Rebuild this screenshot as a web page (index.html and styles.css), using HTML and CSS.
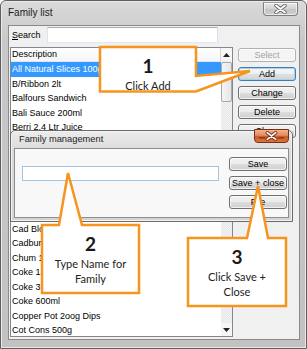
FILE: index.html
```html
<!DOCTYPE html>
<html>
<head>
<meta charset="utf-8">
<title>Family list</title>
<link rel="stylesheet" href="styles.css">
</head>
<body>
<div class="window">
  <div class="titlebar">
    <span class="title">Family list</span>
    <div class="close-btn">
      <svg width="13" height="10" viewBox="0 0 13 10"><path d="M2 1.5 L11 8.5 M11 1.5 L2 8.5" stroke="#6a6a6a" stroke-width="3.6" stroke-linecap="round"/><path d="M2 1.5 L11 8.5 M11 1.5 L2 8.5" stroke="#fff" stroke-width="1.8" stroke-linecap="round"/></svg>
    </div>
  </div>
  <div class="client">
    <div class="left">
      <div class="search-row">
        <span class="search-label"><u>S</u>earch</span>
        <div class="textbox search-input"></div>
      </div>
      <div class="listbox">
        <div class="list-main">
          <div class="list-header"><span>Description</span></div>
          <div class="row selected">All Natural Slices 100g</div>
          <div class="row">B/Ribbon 2lt</div>
          <div class="row">Balfours Sandwich</div>
          <div class="row">Bali Sauce 200ml</div>
          <div class="row">Berri 2.4 Ltr Juice</div>
          <div class="row">Biscuits Assorted</div>
          <div class="row">Bounty Bar</div>
          <div class="row">Bread White</div>
          <div class="row">Bundaberg Ginger Beer</div>
          <div class="row">Burger Rings</div>
          <div class="row">Cad Bar 50g</div>
          <div class="row">Cad Block 250g</div>
          <div class="row">Cadbury Flake</div>
          <div class="row">Chum 1.2kg</div>
          <div class="row">Coke 1.25lt</div>
          <div class="row">Coke 375ml</div>
          <div class="row">Coke 600ml</div>
          <div class="row">Copper Pot 2oog Dips</div>
          <div class="row">Cot Cons 500g</div>
        </div>
        <div class="vscroll">
          <div class="sb-arrow"><svg width="7" height="4" viewBox="0 0 7 4"><path d="M0 4 L3.5 0 L7 4 Z" fill="#222"/></svg></div>
          <div class="sb-thumb"></div>
          <div class="sb-track"></div>
          <div class="sb-arrow"><svg width="7" height="4" viewBox="0 0 7 4"><path d="M0 0 L3.5 4 L7 0 Z" fill="#222"/></svg></div>
        </div>
      </div>
    </div>
    <div class="side-buttons">
      <div class="btn disabled">Select</div>
      <div class="btn focused">Add</div>
      <div class="btn">Change</div>
      <div class="btn">Delete</div>
      <div class="btn">Close</div>
    </div>
  </div>
</div>

<div class="dialog">
  <div class="dlg-title">Family management</div>
  <div class="dlg-close">
    <svg width="35" height="14" viewBox="0 0 35 14"><path d="M4 9 H11 M24 9 H31" stroke="#8a2f12" stroke-width="1.2"/><path d="M13 3.5 L22 10.5 M22 3.5 L13 10.5" stroke="#7a2a10" stroke-width="3.6" stroke-linecap="round"/><path d="M13 3.5 L22 10.5 M22 3.5 L13 10.5" stroke="#fff" stroke-width="1.8" stroke-linecap="round"/></svg>
  </div>
  <div class="dlg-client">
    <div class="textbox dlg-input"></div>
    <div class="dlg-buttons">
      <div class="btn">Save</div>
      <div class="btn">Save + close</div>
      <div class="btn">File</div>
    </div>
  </div>
</div>

<svg class="callout-shapes" width="307" height="349" viewBox="0 0 307 349">
  <polygon points="100,47 196,47 196,76 250,71 196,91.5 100,91.5" />
  <polygon points="42,225 59,225 68,173 82,225 139,225 139,293 42,293" />
  <polygon points="188,238 247,238 258,186 268,238 286,238 286,306 188,306" />
</svg>

<div class="callout c1">
  <div class="num">1</div>
  <div class="ctext">Click Add</div>
</div>
<div class="callout c2">
  <div class="num">2</div>
  <div class="ctext">Type Name for<br>Family</div>
</div>
<div class="callout c3">
  <div class="num">3</div>
  <div class="ctext">Click Save +<br>Close</div>
</div>
</body>
</html>
```
FILE: styles.css
```css
* { box-sizing: border-box; }
html, body { margin: 0; padding: 0; }
body {
  width: 307px;
  height: 349px;
  overflow: hidden;
  position: relative;
  background: #ffffff;
  font-family: "Liberation Sans", Arial, sans-serif;
  font-size: 9px;
  color: #000;
}

/* ---------- main window ---------- */
.window {
  width: 307px;
  height: 349px;
  border: 1px solid #5f5f5f;
  border-radius: 6px 6px 0 0;
  background: linear-gradient(#dadada, #c8c8c8 40px, #c2c2c2);
  box-shadow: inset 0 0 0 1px #e9e9e9;
  display: flex;
  flex-direction: column;
}
.titlebar {
  height: 24px;
  display: flex;
  justify-content: space-between;
  align-items: flex-start;
  padding: 0 8px 0 7px;
}
.title {
  font-size: 10px;
  line-height: 24px;
  color: #1c1c1c;
}
.close-btn {
  width: 35px;
  height: 14px;
  margin-top: 1px;
  border: 1px solid #7f7f7f;
  border-top-color: #a0a0a0;
  border-radius: 0 0 4px 4px;
  background: linear-gradient(#e8e8e8, #d2d2d2 50%, #c4c4c4 50%, #cecece);
  box-shadow: inset 0 0 0 1px rgba(255,255,255,0.6);
  display: flex;
  align-items: center;
  justify-content: center;
}
.client {
  margin: 0 6px 0 7px;
  height: 315px;
  border: 1px solid #8a8a8a;
  background: #f0f0f0;
  display: flex;
}
.left {
  width: 223px;
  margin-left: 1px;
  padding-top: 1px;
  display: flex;
  flex-direction: column;
}
.search-row {
  height: 16px;
  display: flex;
  align-items: center;
}
.search-label {
  width: 37px;
  padding-left: 2px;
  line-height: 16px;
}
.textbox {
  background: #fff;
  border: 1px solid;
  border-color: #abadb3 #dbdfe6 #e3e9ef #e2e3ea;
}
.search-input {
  width: 171px;
  height: 16px;
}
.listbox {
  margin-top: 4px;
  height: 290px;
  border: 1px solid #828790;
  background: #fff;
  display: flex;
}
.list-main {
  flex: 1;
  overflow: hidden;
}
.list-header {
  height: 14px;
  line-height: 13px;
  padding-left: 1px;
  border-bottom: 1px solid #e5e5e5;
  border-right: 1px solid #d5d5d5;
  background: linear-gradient(#ffffff, #f5f6f7);
}
.row {
  height: 14.5px;
  line-height: 14.5px;
  padding-left: 1px;
  white-space: nowrap;
}
.row.selected {
  background: #3399ff;
  color: #fff;
}
.vscroll {
  width: 11px;
  display: flex;
  flex-direction: column;
  background: repeating-conic-gradient(#f3f3f3 0 25%, #e7e7e7 0 50%) 0 0 / 2px 2px;
}
.sb-arrow {
  height: 13px;
  display: flex;
  align-items: center;
  justify-content: center;
  background: #f6f6f6;
}
.sb-thumb {
  height: 40px;
  margin: 1px 0;
  border: 1px solid #a9a9a9;
  border-radius: 2px;
  background: linear-gradient(90deg, #f4f4f4, #e6e6e6);
}
.sb-track { flex: 1; }

/* ---------- buttons ---------- */
.side-buttons {
  width: 58px;
  margin-left: 5px;
  padding-top: 22px;
  display: flex;
  flex-direction: column;
  gap: 5px;
}
.btn {
  height: 14px;
  border: 1px solid #707070;
  border-radius: 3px;
  background: linear-gradient(#f2f2f2 0, #ebebeb 50%, #dddddd 50%, #cfcfcf 100%);
  box-shadow: inset 0 0 0 1px rgba(255,255,255,0.7);
  text-align: center;
  line-height: 12px;
  font-size: 9px;
  white-space: nowrap;
}
.btn.disabled {
  border-color: #adb2b5;
  background: #f4f4f4;
  color: #a3a3a3;
}
.btn.focused {
  border-color: #3c7fb1;
  box-shadow: inset 0 0 0 1px #a6d2ee;
  background: linear-gradient(#f7f7f7 0, #eeeeee 50%, #e0e0e0 50%, #d4d4d4 100%);
}

/* ---------- family management dialog ---------- */
.dialog {
  position: absolute;
  left: 10px;
  top: 130px;
  width: 283px;
  height: 92px;
  border: 1px solid #6a6a6a;
  border-radius: 5px 5px 0 0;
  background: linear-gradient(#ececec, #dadada 20px, #d4d4d4);
  box-shadow: inset 0 0 0 1px #f4f4f4;
  display: flex;
  flex-direction: column;
}
.dlg-title {
  height: 17px;
  line-height: 17px;
  padding-left: 8px;
  font-size: 9.3px;
  color: #1c1c1c;
}
.dlg-close {
  position: absolute;
  top: -2px;
  right: 3px;
  width: 35px;
  height: 14px;
  border: 1px solid #7a2e14;
  border-radius: 0 0 4px 4px;
  background: linear-gradient(#f0b58f, #e08a5a 45%, #cc5a2a 55%, #d8773e);
  display: flex;
  align-items: center;
  justify-content: center;
}
.dlg-client {
  flex: 1;
  margin: 0 3px 3px 3px;
  border: 1px solid #8e8e8e;
  background: #f8f8f8;
  display: flex;
}
.dlg-input {
  width: 197px;
  height: 15px;
  margin: 17px 0 0 7px;
  border-color: #a3c4e2;
}
.dlg-buttons {
  width: 58px;
  margin: 8px 0 0 10px;
  display: flex;
  flex-direction: column;
  gap: 5px;
}

/* ---------- callouts ---------- */
.callout-shapes {
  position: absolute;
  left: 0;
  top: 0;
}
.callout-shapes polygon {
  fill: #ffffff;
  stroke: #f7941d;
  stroke-width: 2.5;
  stroke-linejoin: miter;
}
.callout {
  position: absolute;
  display: flex;
  flex-direction: column;
  align-items: center;
  padding-top: 9px;
  font-family: Lato, "Open Sans", sans-serif;
  color: #222;
  text-align: center;
}
.callout .num {
  font-size: 19px;
  font-weight: 700;
  line-height: 20px;
  color: #1a1a1a;
}
.callout .ctext {
  margin-top: 3px;
  font-size: 11px;
  line-height: 14.5px;
}
.c1 { left: 100px; top: 47px; width: 96px; height: 44px; }
.c2 { left: 42px; top: 225px; width: 97px; height: 68px; }
.c3 { left: 188px; top: 238px; width: 98px; height: 68px; }
```
